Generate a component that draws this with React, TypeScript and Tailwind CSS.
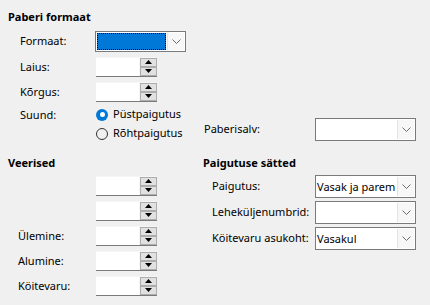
import React from "react";

function Chevron() {
  return (
    <svg width="9" height="5" viewBox="0 0 9 5" className="text-[#6b6b6b]">
      <polyline points="0.5,0.5 4.5,4.5 8.5,0.5" fill="none" stroke="currentColor" strokeWidth="1" />
    </svg>
  );
}

function Combo({ value, className, focused }: { value?: string; className: string; focused?: boolean }) {
  return (
    <div className={"flex border border-[#7a7a7a] bg-white " + className}>
      {focused ? (
        <div className="flex-1 m-[1px] bg-[#0078d7] border border-dotted border-black" />
      ) : (
        <div className="flex-1 flex items-center pl-[1px] leading-none whitespace-nowrap overflow-hidden">{value}</div>
      )}
      <div className="w-[17px] my-[1px] mr-[1px] flex items-center justify-center border-l border-[#e3e3e3] bg-[#f7f7f7]">
        <Chevron />
      </div>
    </div>
  );
}

function SpinBtn({ up }: { up?: boolean }) {
  return (
    <div className="w-[17px] h-[9px] flex items-center justify-center border border-[#adadad] bg-[#e1e1e1]">
      <svg width="7" height="4" viewBox="0 0 7 4">
        <polygon points={up ? "0,4 3.5,0 7,4" : "0,0 3.5,4 7,0"} fill="#000" />
      </svg>
    </div>
  );
}

function Spin() {
  return (
    <div className="flex w-[61px] h-[20px] border-b border-[#7a7a7a] bg-[#f6f6f6]">
      <div className="w-[43px] mt-[1px] bg-white" />
      <div className="flex flex-col justify-center ml-[1px]">
        <SpinBtn up />
        <SpinBtn />
      </div>
    </div>
  );
}

function Radio({ checked, label }: { checked?: boolean; label: string }) {
  return (
    <div className="flex items-center h-[15px] gap-[5px]">
      {checked ? (
        <div className="w-[12px] h-[12px] rounded-full bg-[#0078d7] flex items-center justify-center">
          <div className="w-[5px] h-[5px] rounded-full bg-white" />
        </div>
      ) : (
        <div className="w-[12px] h-[12px] rounded-full border border-[#333333]" />
      )}
      <span>{label}</span>
    </div>
  );
}

export default function App() {
  return (
    <div className="w-[430px] h-[305px] bg-[#f0f0f0] text-[11px] text-black font-['Noto_Sans',sans-serif] px-2 pt-[10px]">
      <div className="h-[14px] leading-[14px] font-bold">Paberi formaat</div>

      <div className="mt-[7px] flex h-[21px] items-center">
        <div className="w-[87px] pl-[12px]">Formaat:</div>
        <Combo focused className="w-[91px] h-[21px]" />
      </div>
      <div className="mt-[5px] flex h-[20px] items-center">
        <div className="w-[88px] pl-[12px]">Laius:</div>
        <Spin />
      </div>
      <div className="mt-[5px] flex h-[20px] items-center">
        <div className="w-[88px] pl-[12px]">Kõrgus:</div>
        <Spin />
      </div>

      <div className="mt-[5px] flex items-end">
        <div className="w-[87px] pl-[12px] self-start h-[15px] leading-[15px]">Suund:</div>
        <div className="w-[109px] flex flex-col gap-[4px] pl-[1px]">
          <Radio checked label="Püstpaigutus" />
          <Radio label="Rõhtpaigutus" />
        </div>
        <div className="w-[111px] h-[23px] flex items-center">Paberisalv:</div>
        <Combo className="w-[101px] h-[23px]" />
      </div>

      <div className="mt-[15px] flex">
        <div className="w-[195px]">
          <div className="h-[14px] leading-[14px] font-bold">Veerised</div>
          <div className="mt-[6px] flex flex-col gap-[5px]">
            {["", "", "Ülemine:", "Alumine:", "Köitevaru:"].map((l, i) => (
              <div key={i} className="flex h-[20px] items-center">
                <div className="w-[88px] pl-[10px]">{l}</div>
                <Spin />
              </div>
            ))}
          </div>
        </div>
        <div>
          <div className="h-[14px] leading-[14px] font-bold">Paigutuse sätted</div>
          <div className="mt-[5px] flex flex-col gap-[3px]">
            {[
              ["Paigutus:", "Vasak ja parem"],
              ["Leheküljenumbrid:", ""],
              ["Köitevaru asukoht:", "Vasakul"],
            ].map(([l, v]) => (
              <div key={l} className="flex h-[23px] items-center">
                <div className="w-[112px] pl-[9px] whitespace-nowrap">{l}</div>
                <Combo value={v} className="w-[101px] h-[23px]" />
              </div>
            ))}
          </div>
        </div>
      </div>
    </div>
  );
}
